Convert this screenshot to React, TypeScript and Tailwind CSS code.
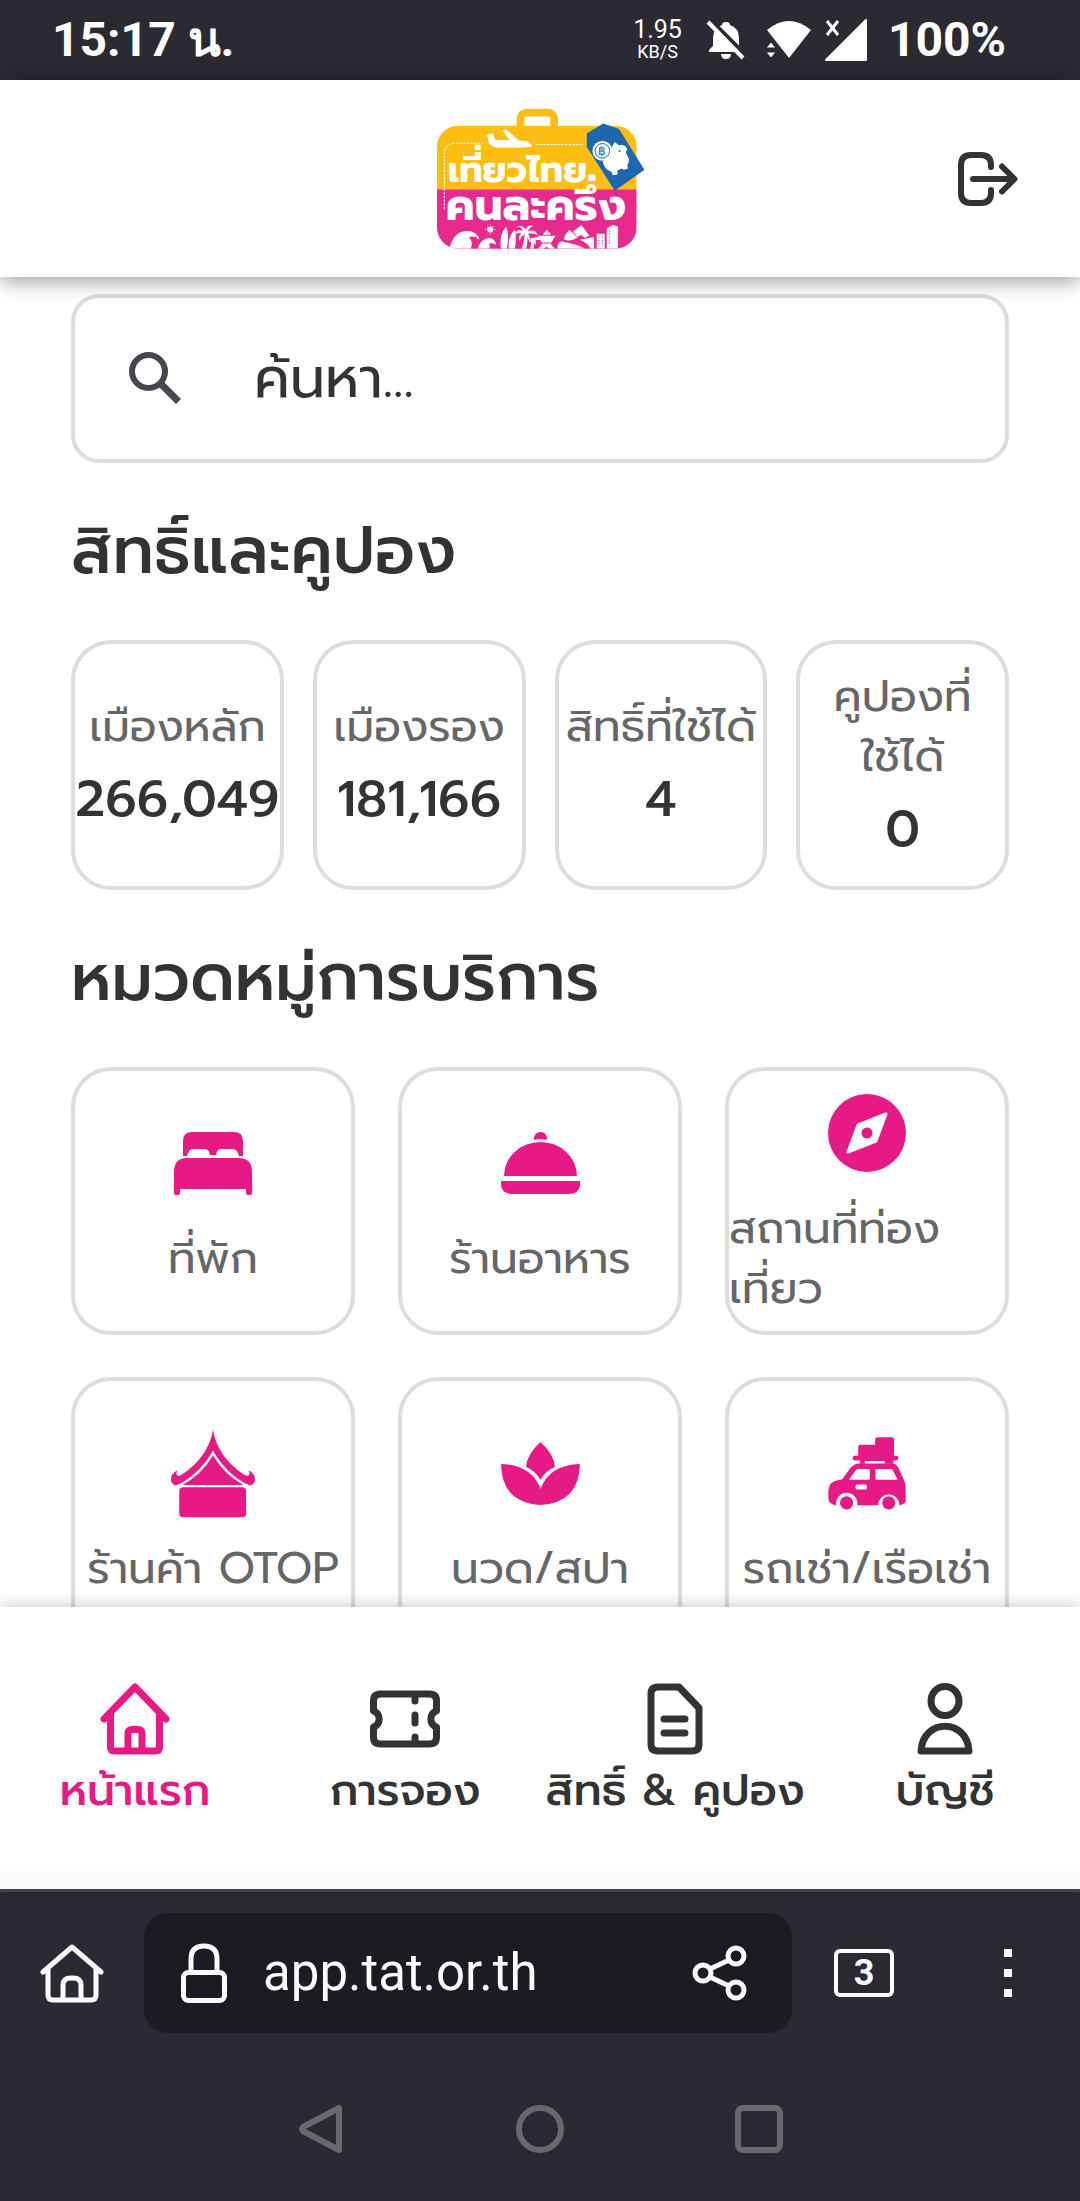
import type { ReactNode } from "react";

const stats = [
  { label: "เมืองหลัก", value: "266,049" },
  { label: "เมืองรอง", value: "181,166" },
  { label: "สิทธิ์ที่ใช้ได้", value: "4" },
  { label: "คูปองที่ใช้ได้", value: "0" },
];

const services: { label: string; icon: ReactNode }[] = [
  {
    label: "ที่พัก",
    icon: (
      <svg width="78" height="63" viewBox="0 0 78 63" fill="currentColor">
        <path d="M9 24V9Q9 0 18 0H60Q69 0 69 9V24H65Q63 17 59 17H47Q43 17 42 23H36Q35 17 31 17H19Q15 17 13 24Z" />
        <path d="M0 61V40Q0 26 13 26H65Q78 26 78 40V61Q78 63 75 63Q72 63 72 61V57H6V61Q6 63 3 63Q0 63 0 61Z" />
      </svg>
    ),
  },
  {
    label: "ร้านอาหาร",
    icon: (
      <svg width="79" height="62" viewBox="0 0 79 62" fill="currentColor">
        <path d="M33 8Q33 0 39.500 0Q46 0 46 8Q39.500 6 33 8Z" />
        <path d="M3 44A36.500 34 0 0 1 76 44Z" />
        <path d="M0 49H79V52Q79 62 67 62H12Q0 62 0 52Z" />
      </svg>
    ),
  },
  {
    label: "สถานที่ท่องเที่ยว",
    icon: (
      <svg width="78" height="78" viewBox="0 0 78 78">
        <circle cx="39" cy="39" r="39" fill="currentColor" />
        <path d="M58 20L48 47L20 58L30 31Z" fill="#fff" stroke="#fff" strokeWidth="3" strokeLinejoin="round" />
        <circle cx="39" cy="39" r="5.500" fill="currentColor" />
      </svg>
    ),
  },
  {
    label: "ร้านค้า OTOP",
    icon: (
      <svg width="86" height="89" viewBox="18 12 260 267" fill="currentColor">
        <path d="M148 12C142 58 110 118 46 153Q33 153 40 136Q19 148 21 166Q23 178 36 182C90 160 130 110 148 76C166 110 206 160 260 182Q273 178 275 166Q277 148 256 136Q263 153 250 153C186 118 154 58 148 12Z" />
        <path d="M148 91Q112 150 56 180H240Q184 150 148 91Z" />
        <rect x="46" y="187" width="202" height="91" rx="12" />
      </svg>
    ),
  },
  {
    label: "นวด/สปา",
    icon: (
      <svg width="79" height="63" viewBox="0 0 79 63" fill="currentColor">
        <path d="M39.500 0Q53 12 54 25Q44 29 39.500 38Q35 29 25 25Q26 12 39.500 0Z" />
        <path d="M0 22Q31 23 39.500 47Q48 23 79 22Q78 61 39.500 63Q1 61 0 22Z" />
      </svg>
    ),
  },
  {
    label: "รถเช่า/เรือเช่า",
    icon: (
      <svg width="78" height="73" viewBox="39 30 235 219" fill="currentColor">
        <path d="M181 37Q181 30 188 30H231Q238 30 238 37V86H245Q251 86 251 93T245 100H236V110H210V102H150V110H136V100H120Q113 100 113 93T120 86H130V60Q130 53 137 53H181Z" />
        <path d="M64 235Q40 232 40 214V190Q42 165 68 160L82 157L106 124Q118 109 132 109H235Q246 110 252 124L268 160Q273 168 273 182V220Q273 232 254 235A32 32 0 1 0 190 235H127A32 32 0 1 0 64 235Z" />
        <path d="M126 126H165V158H102ZM182 126H232L249 158H182Z" fill="#fff" />
        <rect x="122" y="173" width="34" height="15" rx="5" fill="#fff" />
        <circle cx="95" cy="228" r="20" />
        <circle cx="222" cy="228" r="20" />
      </svg>
    ),
  },
];

const tabs = [
  {
    label: "หน้าแรก",
    active: true,
    icon: (
      <>
        <path d="M4 36L35 4L66 36" />
        <path d="M10.500 31V64Q10.500 68 14.500 68H55.500Q59.500 68 59.500 64V31" />
        <path d="M28 67V51Q28 46.500 32.500 46.500H37.500Q42 46.500 42 51V67" />
      </>
    ),
  },
  {
    label: "การจอง",
    active: false,
    icon: (
      <>
        <path d="M10.500 11H59.500Q66.500 11 66.500 18V28A8.500 8.500 0 0 0 66.500 44V54Q66.500 61 59.500 61H10.500Q3.500 61 3.500 54V44A8.500 8.500 0 0 0 3.500 28V18Q3.500 11 10.500 11Z" />
        <path d="M45 12V18M45 32V40M45 54V60" />
      </>
    ),
  },
  {
    label: "สิทธิ์ & คูปอง",
    active: false,
    icon: (
      <>
        <path d="M18 4H39L59 25V61Q59 68 52 68H18Q11 68 11 61V11Q11 4 18 4Z" />
        <path d="M24 36H45M24 50H45" />
      </>
    ),
  },
  {
    label: "บัญชี",
    active: false,
    icon: (
      <>
        <ellipse cx="35" cy="18" rx="14" ry="14.500" />
        <path d="M11 68C13 35 57 35 59 68Z" />
      </>
    ),
  },
];

function StatusBar() {
  return (
    <div className="flex h-20 shrink-0 items-center justify-between bg-[#2b2a33] pl-[52px] pr-[74px] font-['Roboto',sans-serif] text-white">
      <span className="text-5xl font-bold">15:17 น.</span>
      <div className="flex items-center">
        <div className="mr-6 flex flex-col items-center">
          <span className="text-[25px] leading-6">1.95</span>
          <span className="text-lg leading-5">KB/S</span>
        </div>
        <svg className="mr-5" width="40" height="40" viewBox="0 0 40 40" fill="#fff">
          <path d="M20 2Q24 2 24 5Q33 8 33 18V26L37 30V32H3V30L7 26V18Q7 8 16 5Q16 2 20 2ZM15 34H25Q25 39 20 39T15 34Z" />
          <path d="M5 1L40 36" stroke="#2b2a33" strokeWidth="5" />
          <path d="M2 2L37 38" stroke="#fff" strokeWidth="4" />
        </svg>
        <svg className="mr-3" width="46" height="38" viewBox="0 0 46 38" fill="#fff">
          <path d="M1 9Q23 -9 45 9L23 37Z" />
          <path d="M0 27L5 21L10 27ZM0 31H10L5 37Z" stroke="#2b2a33" strokeWidth="1" />
        </svg>
        <svg className="mr-5" width="44" height="42" viewBox="0 0 44 42">
          <path d="M42 1V41H2Z" fill="#fff" stroke="#fff" strokeWidth="2" strokeLinejoin="round" />
          <path d="M3 2L14 16M14 2L3 16" stroke="#fff" strokeWidth="3" />
        </svg>
        <span className="text-5xl font-bold">100%</span>
      </div>
    </div>
  );
}

function Logo() {
  return (
    <svg width="207" height="142" viewBox="48 25 622 425" role="img" aria-label="เที่ยวไทยคนละครึ่ง">
      <clipPath id="case">
        <rect x="48" y="77" width="600" height="370" rx="64" />
      </clipPath>
      <rect x="299" y="38" width="101" height="80" rx="18" fill="none" stroke="#fdbe14" strokeWidth="23" />
      <g clipPath="url(#case)">
        <rect x="48" y="77" width="600" height="193" fill="#fdbe14" />
        <rect x="48" y="269" width="600" height="180" fill="#e62a8e" />
        {/* waves, sun, boards, palms, temple, hills and towers */}
        <g fill="#fff">
          <path d="M86 447Q96 396 138 394Q168 394 176 420Q160 406 144 412Q158 426 150 447Z" />
          <path d="M170 447Q180 416 206 415Q224 418 226 436Q216 428 204 432Q210 440 206 447Z" />
          <circle cx="208" cy="389" r="9" />
          <path d="M208 374V404M193 389H223M198 379L218 399M218 379L198 399" stroke="#fff" strokeWidth="3" strokeDasharray="3 24 3" />
          <path d="M240 447Q234 405 256 380Q266 410 258 447ZM264 447Q260 410 282 390Q288 420 282 447Z" />
          <path d="M302 447Q314 420 310 400L318 398Q322 425 316 447ZM328 447L334 418L341 419L338 447Z" />
          <path d="M282 404Q286 386 306 394Q300 378 284 382Q306 372 315 390Q320 374 338 378Q324 384 322 394Q344 388 350 406Q332 398 322 402Q330 412 326 422Q314 412 312 402Q300 410 296 424Q290 410 302 400Q290 398 282 404ZM324 426Q330 412 340 414Q356 406 362 424Q350 418 344 422Q348 432 344 436Q338 424 324 426Z" />
          <path d="M350 408H404Q396 420 392 428H362Q360 416 350 408ZM368 398H388V405H368ZM374 392H382V398H374ZM350 447Q362 440 364 431H390Q392 440 404 447H386Q378 436 368 447Z" />
          <path d="M432 408L446 390L470 414Q450 426 430 420ZM456 396L482 376L506 408L492 414L480 406L470 412Z" />
          <path d="M410 447Q410 422 428 426Q470 434 494 447ZM478 420L520 412V447H510Q500 430 478 420Z" />
          <path d="M528 402H552V447H528ZM558 386L576 376L592 380V447H558Z" />
        </g>
        <path d="M534 412V440M545 412V440M566 392V436" stroke="#e62a8e" strokeWidth="3" strokeDasharray="4 5" />
      </g>
      <path d="M70 328V162Q70 132 100 130H188M345 134H490" fill="none" stroke="#fff" strokeWidth="3" strokeDasharray="7 4" />
      <path d="M204 126L198 106L208 101L216 102L224 120L266 121L246 92L256 88L294 122L318 124Q332 130 333 139Q318 144 290 143H228Q212 142 200 124Z" fill="#fff" />
      <g fill="#fff" className="font-['Prompt','Kanit','Noto_Sans_Thai',sans-serif] font-bold">
        <text x="80" y="247" fontSize="110">เที่ยวไทย</text>
        <text x="74" y="360" fontSize="132">คนละครึ่ง</text>
      </g>
      <path d="M502 103L548 75L592 90L666 209L583 267L502 140Z" fill="#1c67ae" stroke="#1c67ae" strokeWidth="8" strokeLinejoin="round" />
      <path d="M574 140L582 126L594 136Q614 132 620 148Q612 156 620 168Q630 180 620 196L622 206L610 210L602 206L590 212V224L576 226L572 216Q550 208 546 184Q572 176 574 140Z" fill="#fff" />
      <circle cx="597" cy="153" r="3" fill="#1c67ae" />
      <circle cx="545" cy="153" r="30" fill="#fff" />
      <circle cx="545" cy="153" r="22" fill="none" stroke="#1c67ae" strokeWidth="3" />
      <text x="545" y="166" fontSize="36" textAnchor="middle" fill="#1c67ae" className="font-['Roboto'] font-medium">฿</text>
    </svg>
  );
}

function Header() {
  return (
    <header className="relative z-10 grid h-[197px] shrink-0 grid-cols-[1fr_auto_1fr] items-center bg-white px-[62px] shadow-[0_4px_20px_rgba(0,0,0,0.4)]">
      <a href="#" className="col-start-2">
        <Logo />
      </a>
      <button type="button" aria-label="ออกจากระบบ" className="justify-self-end text-[#333]">
        <svg width="60" height="54" viewBox="0 0 60 54" fill="none" stroke="currentColor" strokeWidth="6" strokeLinecap="round" strokeLinejoin="round">
          <path d="M33 15V13Q33 3 23 3H13Q3 3 3 13V41Q3 51 13 51H23Q33 51 33 41V38" />
          <path d="M15 27H56M44 14.500L56.500 27L44 39.500" />
        </svg>
      </button>
    </header>
  );
}

function SearchBox() {
  return (
    <label className="flex h-[169px] items-center rounded-[28px] border-4 border-[#ddd] pl-[54px] pr-8">
      <svg className="mr-[72px] shrink-0" width="53" height="53" viewBox="0 0 53 53" fill="none" stroke="#49454f" strokeWidth="6">
        <circle cx="19.500" cy="19.500" r="16.500" />
        <path d="M32 32L49.500 49.500" strokeWidth="7" />
      </svg>
      <input
        type="search"
        aria-label="ค้นหา"
        placeholder="ค้นหา..."
        className="w-full bg-transparent text-[56px] leading-[80px] text-[#333] outline-none placeholder:text-[#333]"
      />
    </label>
  );
}

function BottomNav() {
  return (
    <nav className="relative z-10 grid h-[282px] shrink-0 grid-cols-4 bg-gradient-to-b from-white from-90% to-[#f8f9fa] pt-[76px] shadow-[0_-2px_14px_rgba(0,0,0,0.2)]">
      {tabs.map((tab) => (
        <a
          key={tab.label}
          href="#"
          className={
            tab.active
              ? "flex flex-col items-center gap-1.5 text-[#e61985]"
              : "flex flex-col items-center gap-1.5 text-[#333]"
          }
        >
          <svg width="70" height="72" viewBox="0 0 70 72" fill="none" stroke="currentColor" strokeWidth="7" strokeLinecap="round" strokeLinejoin="round">
            {tab.icon}
          </svg>
          <span className="whitespace-nowrap text-[44px] font-medium leading-[60px]">{tab.label}</span>
        </a>
      ))}
    </nav>
  );
}

function BrowserBar() {
  return (
    <div className="flex h-[168px] shrink-0 items-start border-t-[3px] border-[#46454f] bg-[#2b2a33] pl-10 pt-[21px] font-['Roboto',sans-serif] text-[#fbfbfe]">
      <button type="button" aria-label="หน้าหลัก" className="flex h-[120px] items-center">
        <svg width="64" height="60" viewBox="0 0 64 60" fill="none" stroke="currentColor" strokeWidth="5" strokeLinecap="round" strokeLinejoin="round">
          <path d="M3 29L32 4L61 29M8 26V52Q8 57 13 57H51Q56 57 56 52V26" />
          <path d="M23 56V42Q23 35 31 35H33Q41 35 41 42V56" />
        </svg>
      </button>
      <div className="ml-10 flex h-[120px] min-w-0 flex-1 items-center rounded-[24px] bg-[#1c1b22] pl-[37px] pr-11">
        <svg className="mr-9 shrink-0" width="46" height="60" viewBox="0 0 46 60" fill="none" stroke="currentColor" strokeWidth="5">
          <rect x="2.500" y="29.500" width="41" height="28" rx="5" />
          <path d="M10 29V16Q10 3 23 3T36 16V29" />
        </svg>
        <input
          type="text"
          aria-label="ที่อยู่เว็บ"
          defaultValue="app.tat.or.th"
          className="min-w-0 flex-1 bg-transparent text-[51px] outline-none"
        />
        <button type="button" aria-label="แชร์">
          <svg width="56" height="56" viewBox="0 0 56 56" fill="none" stroke="currentColor" strokeWidth="5">
            <circle cx="11" cy="28" r="8" />
            <circle cx="44" cy="11" r="8" />
            <circle cx="44" cy="45" r="8" />
            <path d="M18 24L37 15M18 32L37 41" />
          </svg>
        </button>
      </div>
      <button type="button" className="ml-[42px] flex h-[120px] items-center">
        <span className="flex h-12 w-[60px] items-center justify-center rounded-md border-4 border-current text-4xl font-bold">3</span>
      </button>
      <button type="button" aria-label="เมนู" className="ml-[110px] mr-[68px] flex h-[120px] flex-col justify-center gap-3">
        <span className="size-2 bg-current" />
        <span className="size-2 bg-current" />
        <span className="size-2 bg-current" />
      </button>
    </div>
  );
}

function SystemNav() {
  return (
    <div className="flex h-36 shrink-0 items-center justify-center gap-[171px] bg-[#2b2a33] text-[#69686c]">
      <button type="button" aria-label="ย้อนกลับ">
        <svg width="48" height="50" viewBox="0 0 48 50" fill="none" stroke="currentColor" strokeWidth="6" strokeLinejoin="round">
          <path d="M42 4V46L6 27Q4 25 6 23Z" />
        </svg>
      </button>
      <button type="button" aria-label="โฮม" className="size-12 rounded-full border-[6px] border-current" />
      <button type="button" aria-label="ล่าสุด" className="size-12 rounded-lg border-[6px] border-current" />
    </div>
  );
}

export default function App() {
  return (
    <div className="flex h-dvh flex-col bg-white font-['Prompt','Kanit','Noto_Sans_Thai',sans-serif] text-[#333]">
      <StatusBar />
      <Header />

      <main className="min-h-0 flex-1 overflow-hidden px-[71px] pt-[17px]">
        <SearchBox />

        <h2 className="mb-10 mt-[39px] text-[65px] font-medium leading-[98px]">สิทธิ์และคูปอง</h2>
        <div className="grid grid-cols-4 gap-[29px]">
          {stats.map((s) => (
            <div
              key={s.label}
              className="flex h-[250px] flex-col items-center justify-center gap-1 rounded-[40px] border-4 border-[#ddd] pt-1 text-center"
            >
              <p className="text-[44px] leading-[60px] text-[#666]">{s.label}</p>
              <p className="text-[51px] font-medium leading-[76px]">{s.value}</p>
            </div>
          ))}
        </div>

        <h2 className="mb-10 mt-[39px] text-[65px] font-medium leading-[98px]">หมวดหมู่การบริการ</h2>
        <div className="grid grid-cols-3 gap-x-[43px] gap-y-[42px]">
          {services.map((s) => (
            <a
              key={s.label}
              href="#"
              className="flex h-[268px] flex-col items-center justify-center gap-4 rounded-[40px] border-4 border-[#ddd]"
            >
              <span className="flex h-[100px] items-center text-[#e61985]">{s.icon}</span>
              <span className="text-[44px] leading-[60px] text-[#666]">{s.label}</span>
            </a>
          ))}
        </div>
      </main>

      <BottomNav />
      <BrowserBar />
      <SystemNav />
    </div>
  );
}
